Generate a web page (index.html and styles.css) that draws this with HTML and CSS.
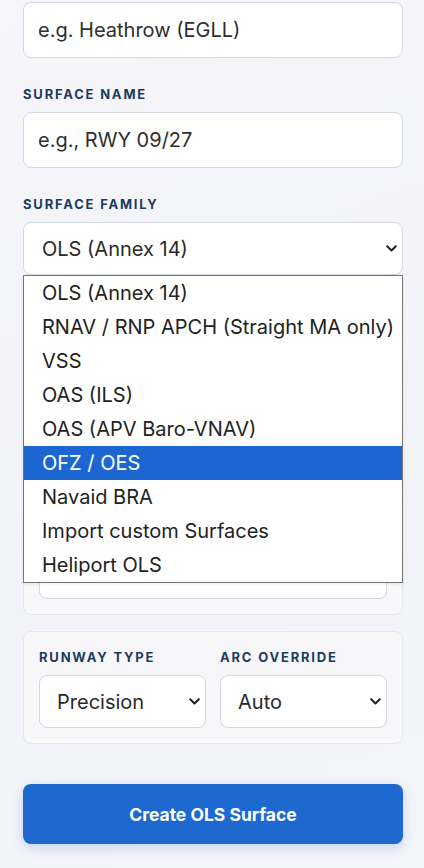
FILE: index.html
```html
<!DOCTYPE html>
<html lang="en">
<head>
<meta charset="utf-8">
<title>Create OLS Surface</title>
<link rel="stylesheet" href="styles.css">
</head>
<body>
<main class="form">
  <div class="field">
    <input class="text-input" type="text" placeholder="e.g. Heathrow (EGLL)">
  </div>

  <div class="field">
    <label class="label">Surface Name</label>
    <input class="text-input" type="text" placeholder="e.g., RWY 09/27">
  </div>

  <div class="field">
    <label class="label">Surface Family</label>
    <div class="select-wrap">
      <select class="select big">
        <option>OLS (Annex 14)</option>
      </select>
      <div class="listbox">
        <div class="opt">OLS (Annex 14)</div>
        <div class="opt">RNAV / RNP APCH (Straight MA only)</div>
        <div class="opt">VSS</div>
        <div class="opt">OAS (ILS)</div>
        <div class="opt">OAS (APV Baro-VNAV)</div>
        <div class="opt active">OFZ / OES</div>
        <div class="opt">Navaid BRA</div>
        <div class="opt">Import custom Surfaces</div>
        <div class="opt">Heliport OLS</div>
      </div>
    </div>
  </div>

  <section class="card card-hidden">
    <input class="text-input covered" type="text" aria-label="Runway length">
    <input class="text-input covered" type="text" aria-label="Runway width">
    <input class="text-input covered" type="text" aria-label="Threshold elevation">
    <input class="text-input covered" type="text" aria-label="Bearing">
  </section>

  <section class="card card-runway">
    <div class="grid2">
      <div class="col">
        <label class="label">Runway Type</label>
        <select class="select small-sel">
          <option>Precision</option>
        </select>
      </div>
      <div class="col">
        <label class="label">Arc Override</label>
        <select class="select small-sel">
          <option>Auto</option>
        </select>
      </div>
    </div>
  </section>

  <button class="btn" type="button">Create OLS Surface</button>
</main>
</body>
</html>
```

FILE: styles.css
```css
* { box-sizing: border-box; }

html, body {
  margin: 0;
  padding: 0;
}

body {
  background: linear-gradient(160deg, #f5f5fa 0%, #f2f3f8 60%, #f4f5f9 100%);
  font-family: Inter, "Noto Sans", sans-serif;
  color: #222;
  height: 868px;
  overflow: hidden;
}

.form {
  padding: 2px 21px 0 23px;
  display: flex;
  flex-direction: column;
}

.field {
  display: flex;
  flex-direction: column;
  margin-bottom: 28px;
}

.label {
  display: block;
  font-size: 13px;
  font-weight: 700;
  letter-spacing: 1.8px;
  text-transform: uppercase;
  color: #1b3b5f;
  line-height: 16px;
  margin-bottom: 10px;
}

.text-input {
  width: 100%;
  height: 56px;
  border: 1px solid #d3d7e2;
  border-radius: 8px;
  background: #ffffff;
  padding: 0 14px;
  font-family: Inter, "Noto Sans", sans-serif;
  font-size: 20px;
  color: #2a2a2a;
  outline: none;
}

.text-input::placeholder {
  color: #2e2e2e;
  opacity: 1;
}

.select-wrap {
  position: relative;
}

.select {
  -webkit-appearance: none;
  appearance: none;
  width: 100%;
  border: 1px solid #d3d7e2;
  border-radius: 8px;
  background-color: #ffffff;
  background-image: url("data:image/svg+xml;utf8,<svg xmlns='http://www.w3.org/2000/svg' width='11' height='7' viewBox='0 0 11 7'><path d='M1.2 1.2 L5.5 5.5 L9.8 1.2' fill='none' stroke='%23202020' stroke-width='2' stroke-linecap='round' stroke-linejoin='round'/></svg>");
  background-repeat: no-repeat;
  background-size: 11px 7px;
  background-position: right 5px center;
  font-family: Inter, "Noto Sans", sans-serif;
  font-size: 20px;
  color: #2a2a2a;
  padding: 0 20px 0 18px;
  outline: none;
}

.select.big {
  height: 53px;
}

.listbox {
  position: absolute;
  left: 0;
  right: 0;
  top: 100%;
  background: #ffffff;
  border: 1px solid #767676;
  z-index: 10;
  box-shadow: 0 1px 3px rgba(0, 0, 0, 0.08);
}

.opt {
  height: 34px;
  line-height: 34px;
  padding-left: 18px;
  font-size: 20px;
  color: #222;
  white-space: nowrap;
}

.opt.active {
  background: #1c66d1;
  color: #ffffff;
}

.card {
  background: #f7f7f9;
  border: 1px solid #e6e7ed;
  border-radius: 8px;
  padding: 16px 15px 15px;
  margin-bottom: 16px;
}

.card-hidden {
  margin-top: -7px;
  display: flex;
  flex-direction: column;
  gap: 14px;
}

.card-runway {
  padding-top: 17px;
}

.text-input.covered {
  height: 61px;
  flex: none;
}

.grid2 {
  display: grid;
  grid-template-columns: 1fr 1fr;
  column-gap: 14px;
}

.col {
  display: flex;
  flex-direction: column;
}

.small-sel {
  height: 53px;
  padding-left: 17px;
}

.btn {
  margin-top: 24px;
  height: 60px;
  border: none;
  border-radius: 8px;
  background: #1d69cf;
  color: #ffffff;
  font-family: Inter, "Noto Sans", sans-serif;
  font-size: 17.5px;
  font-weight: 700;
  box-shadow: 0 4px 12px rgba(29, 105, 207, 0.22);
}
```
